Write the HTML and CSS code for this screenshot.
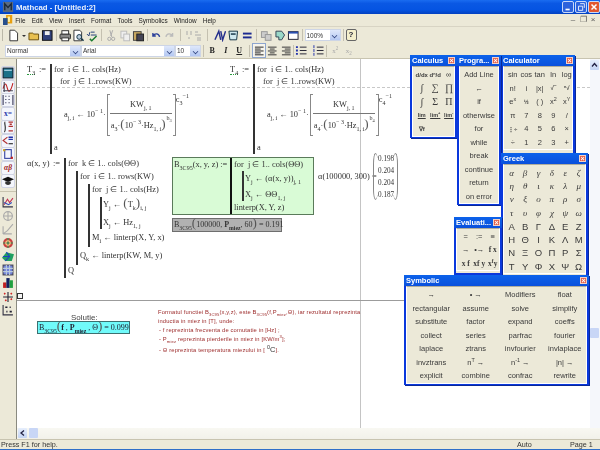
FILE: index.html
```html
<!DOCTYPE html>
<html lang="en">
<head>
<meta charset="utf-8">
<title>Mathcad - [Untitled:2]</title>
<link rel="stylesheet" href="styles.css">
</head>
<body>
<div class="app">
  <header class="titlebar">
    <svg class="ico" viewBox="0 0 13 13"><rect x="1" y="1" width="11" height="11" fill="#5a6a80"/><path d="M3 10V3l3.500 4L10 3v7" fill="none" stroke="#1c2a3a" stroke-width="1.500"/></svg>
    <span class="title-text">Mathcad - [Untitled:2]</span>
    <span class="grow"></span>
    <span class="winbtn">
      <svg viewBox="0 0 12 12"><rect x="3" y="8" width="5" height="2" fill="#fff"/></svg>
    </span>
    <span class="winbtn">
      <svg viewBox="0 0 12 12"><path d="M5 2h5v5M3 5h5v5H3z" fill="none" stroke="#fff"/></svg>
    </span>
    <span class="winbtn close">
      <svg viewBox="0 0 12 12"><path d="M3 3l6 6M9 3l-6 6" stroke="#fff" stroke-width="1.800"/></svg>
    </span>
  </header>

  <nav class="menubar">
    <svg class="menu-logo" viewBox="0 0 13 13"><rect x="4" y="0" width="8" height="11" fill="#e8a010"/><rect x="6" y="2" width="3" height="7" fill="#fff0a0"/><rect x="0" y="4" width="6" height="9" fill="#28508c"/></svg>
    <span>File</span><span>Edit</span><span>View</span><span>Insert</span><span>Format</span><span>Tools</span><span>Symbolics</span><span>Window</span><span>Help</span>
    <span class="grow"></span>
    <span class="mdibtn">&#8211;</span><span class="mdibtn">&#10064;</span><span class="mdibtn">&#215;</span>
  </nav>

  <div class="toolbar">
    <span class="grip"></span>
    <svg class="tb" viewBox="0 0 13 13"><path d="M3 1h5l3 3v8H3z" fill="#fff" stroke="#333"/></svg>
    <svg class="tb-small" viewBox="0 0 6 13"><path d="M1 6h4L3 8z" fill="#333"/></svg>
    <svg class="tb" viewBox="0 0 13 13"><path d="M1 11V4h4l1 1h5v6z" fill="#e8c050" stroke="#6a5010"/></svg>
    <svg class="tb" viewBox="0 0 13 13"><rect x="1.500" y="1.500" width="10" height="10" fill="#30407a" stroke="#111"/><rect x="4" y="2" width="5" height="4" fill="#eee"/></svg>
    <span class="sep s1"></span>
    <svg class="tb" viewBox="0 0 13 13"><rect x="1" y="5" width="11" height="5" rx="1" fill="#888" stroke="#333"/><rect x="3" y="1.500" width="7" height="3.500" fill="#fff" stroke="#333"/><rect x="3" y="9" width="7" height="3" fill="#fff" stroke="#333"/></svg>
    <svg class="tb" viewBox="0 0 13 13"><path d="M2 1h6l2 2v9H2z" fill="#fff" stroke="#333"/><circle cx="7.500" cy="8" r="2.500" fill="#bcd" stroke="#134"/><path d="M10 10l2 2" stroke="#134" stroke-width="1.500"/></svg>
    <svg class="tb" viewBox="0 0 13 13"><path d="M1 5l2 2 1-4M5 3h4M5 6h6" fill="none" stroke="#23407a"/><path d="M4 10l2 2 5-5" fill="none" stroke="#1a7a30" stroke-width="1.500"/></svg>
    <span class="sep s2"></span>
    <svg class="tb" viewBox="0 0 13 13"><path d="M5 1l2 7M8 1L6 7" stroke="#aaa" fill="none"/><circle cx="4.500" cy="10" r="1.700" fill="none" stroke="#aaa"/><circle cx="8.500" cy="10" r="1.700" fill="none" stroke="#aaa"/></svg>
    <svg class="tb" viewBox="0 0 13 13"><rect x="2" y="2" width="6" height="7" fill="#eee" stroke="#bbb"/><rect x="5" y="5" width="6" height="7" fill="#eee" stroke="#bbb"/></svg>
    <svg class="tb" viewBox="0 0 13 13"><rect x="1.500" y="2.500" width="8" height="9" fill="#c8a860" stroke="#444"/><rect x="5" y="5" width="7" height="7" fill="#445" stroke="#222"/></svg>
    <span class="sep s1"></span>
    <svg class="tb" viewBox="0 0 13 13"><path d="M3 4v3h3M3 7c2-3 6-3 7 1" fill="none" stroke="#2a3f9a" stroke-width="1.400"/></svg>
    <svg class="tb" viewBox="0 0 13 13"><path d="M10 4v3H7M10 7C8 4 4 4 3 8" fill="none" stroke="#bbb" stroke-width="1.400"/></svg>
    <span class="sep s3"></span>
    <svg class="tb nar" viewBox="0 0 8 13"><path d="M1 3h2M5 3h2M1 5h2M5 5h2M3 9h2" stroke="#aaa"/></svg>
    <svg class="tb nar" viewBox="0 0 8 13"><path d="M1 3h3M1 6h3M4 6h3M3 9h4M3 11h4" stroke="#aaa"/></svg>
    <span class="sep s4"></span>
    <svg class="tb" viewBox="0 0 13 13"><path d="M1 11L5 2l2 9M7 2l2 9 3-9" fill="none" stroke="#242f8c" stroke-width="1.500"/></svg>
    <svg class="tb" viewBox="0 0 13 13"><path d="M2 2h9l-1 9H3z" fill="#cfe8ef" stroke="#134"/><path d="M4 5h5" stroke="#134" stroke-width="1.500"/></svg>
    <svg class="tb" viewBox="0 0 13 13"><rect x="2" y="3.500" width="9" height="2" fill="#1c2a90"/><rect x="2" y="7.500" width="9" height="2" fill="#1c2a90"/></svg>
    <span class="sep s2"></span>
    <svg class="tb" viewBox="0 0 13 13"><rect x="1.500" y="2.500" width="6" height="6" fill="#ccc" stroke="#999"/><rect x="5.500" y="5.500" width="6" height="6" fill="#ccc" stroke="#999"/></svg>
    <svg class="tb" viewBox="0 0 13 13"><path d="M2 2h6l3 4-3 5H5V8H2z" fill="#9ad8c8" stroke="#345"/></svg>
    <svg class="tb" viewBox="0 0 13 13"><rect x="1.500" y="2.500" width="10" height="8" fill="#fff" stroke="#223"/><rect x="1.500" y="2.500" width="10" height="2" fill="#2a4fb0"/></svg>
    <span class="sep s1"></span>
    <span class="combo zoomc"><span class="combo-text">100%</span><span class="arrow"></span></span>
    <span class="sep s1"></span>
    <span class="help">?</span>
  </div>

  <div class="toolbar fmt">
    <span class="combo c-style"><span class="combo-text">Normal</span><span class="arrow"></span></span>
    <span class="combo c-font"><span class="combo-text">Arial</span><span class="arrow"></span></span>
    <span class="combo c-size"><span class="combo-text">10</span><span class="arrow"></span></span>
    <span class="sep s1"></span>
    <b class="tbtext">B</b><i class="tbtext bi">I</i><u class="tbtext bu">U</u>
    <span class="sep s2"></span>
    <svg class="tb active" viewBox="0 0 13 13"><path d="M2 3h9M2 5h6M2 7h9M2 9h6M2 11h9" stroke="#222"/></svg>
    <svg class="tb" viewBox="0 0 13 13"><path d="M2 3h9M4 5h5M2 7h9M4 9h5M2 11h9" stroke="#333"/></svg>
    <svg class="tb" viewBox="0 0 13 13"><path d="M2 3h9M5 5h6M2 7h9M5 9h6M2 11h9" stroke="#333"/></svg>
    <span class="sep s0"></span>
    <svg class="tb" viewBox="0 0 13 13"><path d="M5 3h7M5 6.500h7M5 10h7" stroke="#223"/><path d="M1 3h2M1 6.500h2M1 10h2" stroke="#2233aa" stroke-width="2"/></svg>
    <svg class="tb list2" viewBox="0 0 13 13"><path d="M5 3h7M5 6.500h7M5 10h7" stroke="#223"/><path d="M2 1v3M2 5v3M2 9v3" stroke="#2233aa"/></svg>
    <span class="sep s1"></span>
    <span class="tbtext dim">x<sup>2</sup></span>
    <span class="tbtext dim">x<sub>2</sub></span>
  </div>

  <div class="body-row">
    <aside class="sidebar">
      <span class="sb on"><svg viewBox="0 0 11 11"><rect x="1" y="1" width="9" height="9" fill="#1a7088" stroke="#123"/><path d="M2 3h7" stroke="#bde"/></svg></span>
      <span class="sb on"><svg viewBox="0 0 11 11"><path d="M1 7c2-7 3-4 4 0s3 3 5-5" fill="none" stroke="#c02020"/><path d="M1 9h9M2 1v9" stroke="#445"/></svg></span>
      <span class="sb on"><svg viewBox="0 0 11 11"><path d="M1 1v9M10 1v9M3 2h1M6 2h1M3 5h1M6 5h1M3 8h1M6 8h1" stroke="#335" /></svg></span>
      <span class="sb on label">x=</span>
      <span class="sb on"><svg viewBox="0 0 11 11"><path d="M3 1C2 1 3 4 3 6s0 4-1 4" fill="none" stroke="#222"/><path d="M6 1h4M6 5h4M6 9h4M7 3h2" stroke="#b03030" stroke-width="1.200"/></svg></span>
      <span class="sb on"><svg viewBox="0 0 11 11"><path d="M5 2L1 5l4 3" fill="none" stroke="#b03030"/><path d="M6 2h4M6 4h4" stroke="#2233aa" stroke-width="1.300"/><path d="M6 8h4" stroke="#222"/></svg></span>
      <span class="sb on"><svg viewBox="0 0 11 11"><rect x="2.500" y="1.500" width="6" height="8" fill="none" stroke="#3040a0"/><rect x="1" y="1" width="2" height="2" fill="#c8a020"/><rect x="8" y="8" width="2" height="2" fill="#c02020"/></svg></span>
      <span class="sb on label greek">&#945;&#946;</span>
      <span class="sb on"><svg viewBox="0 0 11 11"><path d="M0 4l5.500-2.500L11 4 5.500 6.500z" fill="#111"/><path d="M3 6v2c2 1.500 3 1.500 5 0V6" fill="#333"/></svg></span>
      <span class="sb-sep"></span>
      <span class="sb"><svg viewBox="0 0 11 11"><path d="M1 1v9h9" fill="none" stroke="#334"/><path d="M2 8l3-5 2 3 3-4" fill="none" stroke="#c03050"/><path d="M2 6l4 2 3-2" fill="none" stroke="#3050c0"/></svg></span>
      <span class="sb"><svg viewBox="0 0 11 11"><circle cx="5.500" cy="5.500" r="4" fill="none" stroke="#aaa"/><path d="M1 5.500h9M5.500 1v9" stroke="#aaa"/></svg></span>
      <span class="sb"><svg viewBox="0 0 11 11"><path d="M1 10l4-3 5-6M1 10V3M1 10h8" fill="none" stroke="#aaa"/></svg></span>
      <span class="sb"><svg viewBox="0 0 11 11"><circle cx="5.500" cy="5.500" r="4.500" fill="#c84040"/><path d="M1 5.500h9M5.500 1v9" stroke="#30a060"/><circle cx="5.500" cy="5.500" r="2" fill="none" stroke="#fc8"/></svg></span>
      <span class="sb"><svg viewBox="0 0 11 11"><path d="M0 7l4-5 7 2-2 6-6 0z" fill="#20a060"/><path d="M4 2l3 4-4 4M1 6l6 0" stroke="#2040c0" fill="none"/></svg></span>
      <span class="sb"><svg viewBox="0 0 11 11"><rect x="1" y="1" width="9" height="9" fill="#7080d8" stroke="#445"/><path d="M1 4h9M1 7h9M4 1v9M7 1v9" stroke="#bcd"/></svg></span>
      <span class="sb"><svg viewBox="0 0 11 11"><rect x="1" y="5" width="3" height="5" fill="#c02020"/><rect x="4" y="1" width="3" height="9" fill="#102060"/><rect x="7" y="3" width="3" height="7" fill="#20a040"/></svg></span>
      <span class="sb"><svg viewBox="0 0 11 11"><path d="M5.500 1v9M1 5.500h9" stroke="#223"/><path d="M2 2l1 1M8 2l1 1M3 8l1 1M8 7l1 1" stroke="#d02020" stroke-width="1.500"/></svg></span>
      <span class="sb"><svg viewBox="0 0 11 11"><path d="M1 1v9h9" fill="none" stroke="#334"/><path d="M3 3h2M7 3h1M4 7h1M7 7h2" stroke="#223" stroke-width="1.500"/></svg></span>
    </aside>

    <main class="sheet-wrap">
      <div class="sheet-row">
        <section class="sheet">
          <div class="dotline"></div>
          <div class="vline"></div>
          <div class="hline"></div>
          <span class="anchor"></span>

          <div class="region t3">
            <span class="defname"><span class="u">T<sub>3</sub></span></span><span class="assign">:=</span>
            <div class="prog p-t">
              <div class="ln">for&nbsp; i &#8712; 1.. cols(Hz)</div>
              <div class="ln in">for&nbsp; j &#8712; 1..rows(KW)</div>
              <div class="formula">
                <span>a<sub>j, i</sub> &#8592; 10<sup>&#8722; 1</sup>&#183;</span>
                <span class="brk l"></span>
                <span class="frac">
                  <span class="num">KW<sub>j, 1</sub></span>
                  <span class="den">a<sub>3</sub>&#183;<span class="par">(</span>10<sup>&#8722; 3</sup>&#183;Hz<sub>1, i</sub><span class="par">)</span><sup class="bexp">b<sub>3</sub></sup></span>
                </span>
                <span class="brk r"></span>
                <span class="cexp">c<sub>3</sub><sup>&#8722;1</sup></span>
              </div>
              <div class="ln">a</div>
            </div>
          </div>

          <div class="region t4">
            <span class="defname"><span class="u">T<sub>4</sub></span></span><span class="assign">:=</span>
            <div class="prog p-t">
              <div class="ln">for&nbsp; i &#8712; 1.. cols(Hz)</div>
              <div class="ln in">for&nbsp; j &#8712; 1..rows(KW)</div>
              <div class="formula">
                <span>a<sub>j, i</sub> &#8592; 10<sup>&#8722; 1</sup>&#183;</span>
                <span class="brk l"></span>
                <span class="frac">
                  <span class="num">KW<sub>j, 1</sub></span>
                  <span class="den">a<sub>4</sub>&#183;<span class="par">(</span>10<sup>&#8722; 3</sup>&#183;Hz<sub>1, i</sub><span class="par">)</span><sup class="bexp">b<sub>4</sub></sup></span>
                </span>
                <span class="brk r"></span>
                <span class="cexp">c<sub>4</sub><sup>&#8722;1</sup></span>
              </div>
              <div class="ln">a</div>
            </div>
          </div>

          <div class="region alpha">
            <span class="defname wa">&#945;(x, y)</span><span class="assign">:=</span>
            <div class="prog">
              <div class="ln">for&nbsp; k &#8712; 1.. cols(&#920;&#920;)</div>
              <div class="prog nest">
                <div class="ln">for&nbsp; i &#8712; 1.. rows(KW)</div>
                <div class="prog nest">
                  <div class="ln">for&nbsp; j &#8712; 1.. cols(Hz)</div>
                  <div class="prog nest inner">
                    <div class="ln t1">Y<sub>j</sub> &#8592; <span class="par">(</span>T<sub>k</sub><span class="par">)</span><sub>i, j</sub></div>
                    <div class="ln t2">X<sub>j</sub> &#8592; Hz<sub>1, j</sub></div>
                  </div>
                  <div class="ln t3l">M<sub>i</sub> &#8592; linterp(X, Y, x)</div>
                </div>
                <div class="ln t3l">Q<sub>k</sub> &#8592; linterp(KW, M, y)</div>
              </div>
              <div class="ln">Q</div>
            </div>
          </div>

          <div class="region bdef">
            <span class="bname">B<sub>3C95</sub>(x, y, z) :=</span>
            <div class="prog black">
              <div class="ln">for&nbsp; j &#8712; 1.. cols(&#920;&#920;)</div>
              <div class="prog nest inner bi2">
                <div class="ln b1">Y<sub>j</sub> &#8592; (&#945;(x, y))<sub>j, 1</sub></div>
                <div class="ln b2">X<sub>j</sub> &#8592; &#920;&#920;<sub>1, j</sub></div>
              </div>
              <div class="ln b3">linterp(X, Y, z)</div>
            </div>
          </div>

          <div class="region beval">B<sub>3C95</sub><span class="par">(</span>100000, <b class="pm">P<sub>miez</sub></b>, 60<span class="par">)</span> = 0.191</div>

          <div class="region aeval">&#945;(100000, 300) =</div>
          <div class="region matrix">
            <span class="mpar l"></span>
            <span class="mvals"><span>0.198</span><span>0.204</span><span>0.204</span><span>0.187</span></span>
            <span class="mpar r"></span>
          </div>

          <div class="region sol">Solutie:</div>
          <div class="region solbox">B<sub>3C95</sub><span class="par">(</span><b>f</b> , <b class="pm">P<sub>miez</sub></b> , &#920;<span class="par">)</span> = 0.099</div>

          <div class="region note">
            <div>Formatul functiei B<sub>3C95</sub>(x,y,z), este B<sub>3C95</sub>(f,P<sub>miez</sub>,&#920;), iar rezultatul reprezinta</div>
            <div>inductia in miez in [T], unde:</div>
            <div class="it">- f reprezinta frecventa de comutatie in [Hz] ;</div>
            <div class="it">- P<sub>miez</sub> reprezinta pierderile in miez in [KW/m<sup>3</sup>];</div>
            <div class="it">- &#920; reprezinta temperatura miezului in [ <span class="deg"><sup>0</sup>C</span>].</div>
          </div>
        </section>
        <div class="vscroll">
          <span class="sbtn"><svg viewBox="0 0 9 9"><path d="M2 6l2.500-3L7 6" fill="none" stroke="#224" stroke-width="1.300"/></svg></span>
          <span class="vthumb"></span>
        </div>
      </div>
      <div class="hscroll">
        <span class="sbtn"><svg viewBox="0 0 9 9"><path d="M6 2L3 4.500 6 7" fill="none" stroke="#224" stroke-width="1.300"/></svg></span>
        <span class="hthumb"></span>
      </div>
    </main>
  </div>

  <footer class="status">
    <span class="grow">Press F1 for help.</span>
    <span class="st-auto">Auto</span>
    <span class="st-page">Page 1</span>
  </footer>

  <div class="pal calc-win">
    <div class="pal-t"><span>Calculator</span><i class="x">&#215;</i></div>
    <div class="grid g-calc">
      <span>sin</span><span>cos</span><span>tan</span><span>ln</span><span>log</span>
      <span>n!</span><span>i</span><span>|x|</span><span class="sym">&#8730;&#8254;</span><span class="sym">&#8319;&#8730;</span>
      <span>e<sup>x</sup></span><span class="sym">&#189;</span><span>( )</span><span>x<sup>2</sup></span><span>x<sup>Y</sup></span>
      <span>&#960;</span><span>7</span><span>8</span><span>9</span><span>/</span>
      <span class="sym">&#8942;&#247;</span><span>4</span><span>5</span><span>6</span><span>&#215;</span>
      <span>&#247;</span><span>1</span><span>2</span><span>3</span><span>+</span>
    </div>
  </div>

  <div class="pal calc-us">
    <div class="pal-t"><span>Calculus</span><i class="x">&#215;</i></div>
    <div class="grid g-cal">
      <span class="sym">d/dx</span><span class="sym">d&#8319;/d</span><span>&#8734;</span>
      <span class="big">&#8747;</span><span class="big">&#8721;</span><span class="big">&#8719;</span>
      <span class="big">&#8747;</span><span class="big">&#931;</span><span class="big">&#928;</span>
      <span class="lim">lim</span><span class="lim">lim<sup>+</sup></span><span class="lim">lim<sup>-</sup></span>
      <span class="sym">&#8711;f</span>
    </div>
  </div>

  <div class="pal prog-win">
    <div class="pal-t"><span>Progra...</span><i class="x">&#215;</i></div>
    <div class="grid g-prog">
      <span>Add Line</span><span>&#8592;</span><span>if</span><span>otherwise</span><span>for</span><span>while</span><span>break</span><span>continue</span><span>return</span><span>on error</span>
    </div>
  </div>

  <div class="pal greek-win">
    <div class="pal-t"><span>Greek</span><i class="x">&#215;</i></div>
    <div class="grid g-greek">
      <em>&#945;</em><em>&#946;</em><em>&#947;</em><em>&#948;</em><em>&#949;</em><em>&#950;</em>
      <em>&#951;</em><em>&#952;</em><em>&#953;</em><em>&#954;</em><em>&#955;</em><em>&#956;</em>
      <em>&#957;</em><em>&#958;</em><em>&#959;</em><em>&#960;</em><em>&#961;</em><em>&#963;</em>
      <em>&#964;</em><em>&#965;</em><em>&#966;</em><em>&#967;</em><em>&#968;</em><em>&#969;</em>
      <span>&#913;</span><span>&#914;</span><span>&#915;</span><span>&#916;</span><span>&#917;</span><span>&#918;</span>
      <span>&#919;</span><span>&#920;</span><span>&#921;</span><span>&#922;</span><span>&#923;</span><span>&#924;</span>
      <span>&#925;</span><span>&#926;</span><span>&#927;</span><span>&#928;</span><span>&#929;</span><span>&#931;</span>
      <span>&#932;</span><span>&#933;</span><span>&#934;</span><span>&#935;</span><span>&#936;</span><span>&#937;</span>
    </div>
  </div>

  <div class="pal eval-win">
    <div class="pal-t"><span>Evaluati...</span><i class="x">&#215;</i></div>
    <div class="grid g-eval">
      <span>=</span><span>:=</span><span>&#8801;</span>
      <span>&#8594;</span><span>&#8226;&#8594;</span><span class="ser">f x</span>
      <span class="ser">x f</span><span class="ser">xf y</span><span class="ser">x<sup>f</sup>y</span>
    </div>
  </div>

  <div class="pal sym-win">
    <div class="pal-t"><span>Symbolic</span><i class="x">&#215;</i></div>
    <div class="grid g-sym">
      <span>&#8594;</span><span>&#8226; &#8594;</span><span>Modifiers</span><span>float</span>
      <span>rectangular</span><span>assume</span><span>solve</span><span>simplify</span>
      <span>substitute</span><span>factor</span><span>expand</span><span>coeffs</span>
      <span>collect</span><span>series</span><span>parfrac</span><span>fourier</span>
      <span>laplace</span><span>ztrans</span><span>invfourier</span><span>invlaplace</span>
      <span>invztrans</span><span>n<sup>T</sup> &#8594;</span><span>n<sup>-1</sup> &#8594;</span><span>|n| &#8594;</span>
      <span>explicit</span><span>combine</span><span>confrac</span><span>rewrite</span>
    </div>
  </div>
</div>
</body>
</html>
```
FILE: styles.css
```css
* { box-sizing: border-box; }
html, body { margin: 0; padding: 0; }
body { width: 600px; height: 450px; overflow: hidden; background: #ece9d8; font-family: "Liberation Sans", Arial, sans-serif; }
sub, sup { font-size: 72%; line-height: 0; }
.app { position: relative; width: 600px; height: 450px; display: flex; flex-direction: column; overflow: hidden; filter: blur(0.35px); }
.grow { flex: 1; }

.titlebar { height: 14px; flex: none; display: flex; align-items: center; padding-left: 2px; background: linear-gradient(#1a6cf0 0, #0a58e4 25%, #0554e2 70%, #0340c0 100%); }
.ico { width: 12px; height: 12px; margin-right: 2px; }
.title-text { color: #fff; font-weight: bold; font-size: 7.800px; opacity: .9; }
.winbtn { width: 12px; height: 12px; margin-right: 1px; border: 1px solid #c8d8f8; border-radius: 2px; background: #2d63dc; display: block; }
.winbtn svg { display: block; width: 10px; height: 10px; }
.winbtn.close { background: #e2572e; margin-right: 0; }

.menubar { height: 13px; flex: none; display: flex; align-items: center; gap: 6.200px; padding: 0 2px 0 3px; font-size: 6.400px; color: #222; border-bottom: 1px solid #d8d4c4; }
.menu-logo { width: 10px; height: 12px; margin-right: -4px; }
.mdibtn { width: 10px; height: 10px; margin-left: -6.200px; text-align: center; font-size: 8px; line-height: 10px; color: #555; }

.toolbar { height: 16px; flex: none; display: flex; align-items: center; gap: 1px; padding-left: 2px; font-size: 7px; color: #333; }
.toolbar.fmt { height: 16px; padding-left: 5px; gap: 1px; border-bottom: 1px solid #c8c4b0; }
.grip { width: 2px; height: 12px; margin-right: 2px; border-left: 1px solid #bbb8a8; }
.tb { width: 12.500px; height: 13px; flex: none; }
.tb.nar { width: 8px; }
.tb.active { background: #f6f4ec; outline: 1px solid #8ea6cf; }
.tb.list2 { margin-left: 3px; }
.tb-small { width: 6px; height: 13px; flex: none; }
.sep { width: 1px; height: 12px; background: #c4c0b0; flex: none; }
.s0 { margin: 0; }
.s1 { margin: 0 1px; }
.s2 { margin: 0 2px; }
.s3 { margin: 0 3px; }
.s4 { margin: 0 4.500px; }
.combo { height: 12px; display: flex; align-items: center; justify-content: space-between; background: #fff; border: 1px solid #cdd5e6; flex: none; }
.combo-text { padding-left: 1px; font-size: 6.500px; color: #333; }
.arrow { width: 10px; height: 10px; background: linear-gradient(#dfe8fb, #b4c8f2); position: relative; }
.arrow::after { content: ""; position: absolute; left: 2.500px; top: 3px; width: 4px; height: 4px; border-right: 1.300px solid #2a3e7a; border-bottom: 1.300px solid #2a3e7a; transform: rotate(45deg) scale(.8); }
.zoomc { width: 36px; }
.c-style { width: 76px; }
.c-font { width: 94px; margin-left: -1px; }
.c-size { width: 26px; margin-left: -1px; }
.help { width: 11px; height: 12px; border: 1px solid #666; border-radius: 2px; background: #f4efcc; text-align: center; font: bold 8px/10px "Liberation Sans", sans-serif; color: #223; }
.tbtext { width: 12.500px; flex: none; text-align: center; font: bold 8px/12px "Liberation Serif", serif; color: #222; }
.bi { font-style: italic; }
.dim { color: #aaa; font-weight: normal; font-size: 7px; }

.body-row { flex: 1; min-height: 0; display: flex; }
.sidebar { width: 17px; flex: none; padding: 8px 0 0 2px; display: flex; flex-direction: column; gap: 1.500px; border-right: 1px solid #8a8a80; }
.sb { width: 12px; height: 12px; flex: none; display: block; }
.sb.on { background: #f4f6fc; border-radius: 1px; outline: 1px solid #d0d4e4; }
.sb svg { display: block; width: 12px; height: 12px; }
.label { font: bold 7.500px/12px "Liberation Serif", serif; color: #2233aa; text-align: center; }
.greek { font-style: italic; color: #a02020; }
.sb-sep { height: 2px; margin: 2px -2px 2px -2px; border-top: 1px solid #c8c4b0; flex: none; width: 16px; }

.sheet-wrap { flex: 1; min-width: 0; display: flex; flex-direction: column; }
.sheet-row { flex: 1; min-height: 0; display: flex; }
.sheet { flex: 1; position: relative; background: #fff; font: 8.400px/12px "Liberation Serif", serif; color: #333; overflow: hidden; }
.vscroll { width: 10px; flex: none; background: #f5f7fb; padding-top: 1px; display: flex; flex-direction: column; }
.sbtn { width: 9px; height: 10px; display: block; background: linear-gradient(#e6eefc, #c4d4f4); border-radius: 1px; flex: none; }
.sbtn svg { display: block; width: 9px; height: 10px; }
.vthumb { width: 9px; height: 10px; margin-top: 258px; background: #c8d6f6; border-radius: 1px; }
.hscroll { height: 11px; flex: none; display: flex; gap: 2px; padding: 0 0 0 1px; background: linear-gradient(#f8f8f2, #f2f1ea); }
.hthumb { width: 9px; height: 10px; background: #c8d6f6; border-radius: 1px; }

.status { height: 11px; flex: none; display: flex; align-items: center; padding-left: 1px; font-size: 7.200px; color: #333; border-top: 1px solid #c8c4b0; border-bottom: 1px solid #2f6fc8; }
.st-auto { width: 53px; }
.st-page { width: 30px; }

.dotline { position: absolute; left: 0; right: 0; top: 28px; border-top: 1px dashed #c8c8c8; }
.vline { position: absolute; left: 343px; top: 0; bottom: 0; width: 1px; background: #c4c4c4; }
.hline { position: absolute; left: 0; right: 0; top: 241px; height: 1px; background: #9c9c9c; }
.anchor { position: absolute; left: 0; top: 234px; width: 6px; height: 6px; border: 1px solid #333; background: #f4f4f4; }

.region { position: absolute; white-space: nowrap; }
.t3, .t4, .alpha { display: flex; align-items: flex-start; }
.t3 { left: 10px; top: 5px; }
.t4 { left: 213px; top: 5px; }
.alpha { left: 10px; top: 99px; }
.defname { width: 12px; }
.u { border-bottom: 1px dotted #2a9a40; }
.assign { width: 11px; }
.wa { width: 26px; }
.prog { border-left: 2px solid #333; padding-left: 2px; flex: none; }
.prog.black { border-left-color: #111; }
.p-t { height: 90px; display: flex; flex-direction: column; }
.ln { height: 13px; line-height: 12px; }
.ln.in { padding-left: 6px; }
.nest { margin-left: 8px; }
.inner { height: 32px; border-left-width: 2px; padding-left: 1px; }
.t1 { height: 17px; line-height: 15px; }
.t2 { height: 15px; line-height: 18px; }
.t3l { height: 18px; line-height: 17px; }
.formula { height: 55px; padding-left: 10px; display: flex; align-items: center; position: relative; }
.formula > span:first-child { margin-right: 1px; margin-top: -1px; }
.brk { display: block; width: 3px; height: 42px; border: 1px solid #888; margin-top: 0; flex: none; }
.brk.l { border-right: 0; }
.brk.r { border-left: 0; margin-left: 1px; }
.frac { display: flex; flex-direction: column; align-items: center; width: 62px; }
.num { height: 19px; line-height: 19px; border-bottom: 1px solid #777; width: 100%; text-align: center; }
.den { height: 21px; line-height: 24px; width: 100%; text-align: left; padding-left: 1px; }
.bexp { margin-left: 1px; position: relative; top: -4px; }
.cexp { align-self: flex-start; margin-top: 5px; }
.par { font-size: 13px; font-weight: normal; color: #555; line-height: 0; }

.bdef { left: 155px; top: 98px; width: 142px; height: 58px; display: flex; background: #d9fbd6; border: 1px solid #5a7a5a; padding-left: 1px; }
.bname { width: 56px; padding-top: 0; line-height: 13px; }
.bdef > .prog { height: 56px; }
.bdef .ln { height: 13px; line-height: 13px; }
.bdef .bi2 { margin-left: 8px; height: 30px; }
.bdef .b1 { height: 16px; line-height: 16px; }
.bdef .b2 { height: 14px; line-height: 15px; }
.bdef .b3 { line-height: 13px; }
.beval { left: 155px; top: 159px; width: 110px; height: 14px; line-height: 12px; font-size: 8px; background: #b1b1b1; border: 1px solid #6e6e6e; padding-left: 1px; }
.pm { font-weight: bold; font-size: 8px; }
.aeval { left: 301px; top: 112px; }
.matrix { left: 356px; top: 94px; height: 47px; display: flex; }
.mpar { width: 5px; display: block; border: 1px solid #888; border-radius: 5px / 22px; }
.mpar.l { border-right: 0; }
.mpar.r { border-left: 0; }
.mvals { width: 15px; display: flex; flex-direction: column; justify-content: space-between; font-size: 7.200px; line-height: 12px; text-align: center; }

.sol { left: 54px; top: 253px; font: 8px/11px "Liberation Sans", sans-serif; color: #444; }
.solbox { left: 20px; top: 262px; width: 93px; height: 13px; line-height: 11px; font-size: 8px; background: #70fafa; border: 1px solid #3c7070; padding-left: 1px; color: #223; }
.solbox .par { font-size: 13px; }
.note { left: 141px; top: 249px; font: 5.800px/8.800px "Liberation Sans", sans-serif; letter-spacing: .14px; color: #9c2a2a; }
.note .it { padding-left: 1px; height: 9.600px; line-height: 9.600px; }
.deg { color: #333; font-size: 7.500px; }

.pal { position: absolute; border: 2px solid #0a38dc; border-top-width: 0; background: #ece9d8; box-shadow: 1px 1px 0 #0a2898; font-size: 7.500px; color: #3a3a3a; }
.pal-t { height: 11px; margin: 0 -2px; padding: 0 2px; display: flex; align-items: center; justify-content: space-between; background: linear-gradient(#0c62ea, #0a50dc); color: #fff; font-weight: bold; font-size: 7.500px; }
.x { width: 7px; height: 7px; background: #e2604a; border: 1px solid #f4d0c4; color: #fff; font: bold 7px/5px "Liberation Sans", sans-serif; text-align: center; }
.grid { display: grid; justify-items: center; align-items: center; border: 1px solid #fff; border-top: 1px solid #b0ad9c; }
.grid span, .grid em { line-height: 1; }
.calc-us { left: 410px; top: 55px; width: 47px; height: 83px; }
.prog-win { left: 457px; top: 55px; width: 44px; height: 150px; }
.calc-win { left: 501px; top: 55px; width: 74px; height: 100px; }
.greek-win { left: 501px; top: 153px; width: 87px; height: 124px; }
.eval-win { left: 454px; top: 217px; width: 48px; height: 58px; }
.sym-win { left: 404px; top: 275px; width: 185px; height: 110px; }
.g-calc { grid-template-columns: repeat(5, 13.500px); grid-auto-rows: 13.500px; padding: 1px 0 0 2px; }
.g-cal { grid-template-columns: repeat(3, 13.500px); grid-auto-rows: 13.500px; padding: 1px 0 0 2px; }
.g-prog { grid-template-columns: 1fr; grid-auto-rows: 13.500px; padding-top: 1px; }
.g-greek { grid-template-columns: repeat(6, 13.400px); grid-auto-rows: 13.400px; padding: 1px 0 0 1px; font-size: 9.500px; }
.g-greek em { font: italic 9px "Liberation Serif", serif; }
.g-eval { grid-template-columns: repeat(3, 13.500px); grid-auto-rows: 13.400px; padding: 1px 0 0 2px; }
.g-sym { grid-template-columns: repeat(4, 44.500px); grid-auto-rows: 13.500px; padding: 1px 0 0 2px; }
.sym { font-size: 6px; font-weight: bold; }
.big { font: 10px "Liberation Serif", serif; }
.lim { font-size: 5.500px; font-weight: bold; text-decoration: underline; }
.ser { font: bold 7.500px "Liberation Serif", serif; }
```
